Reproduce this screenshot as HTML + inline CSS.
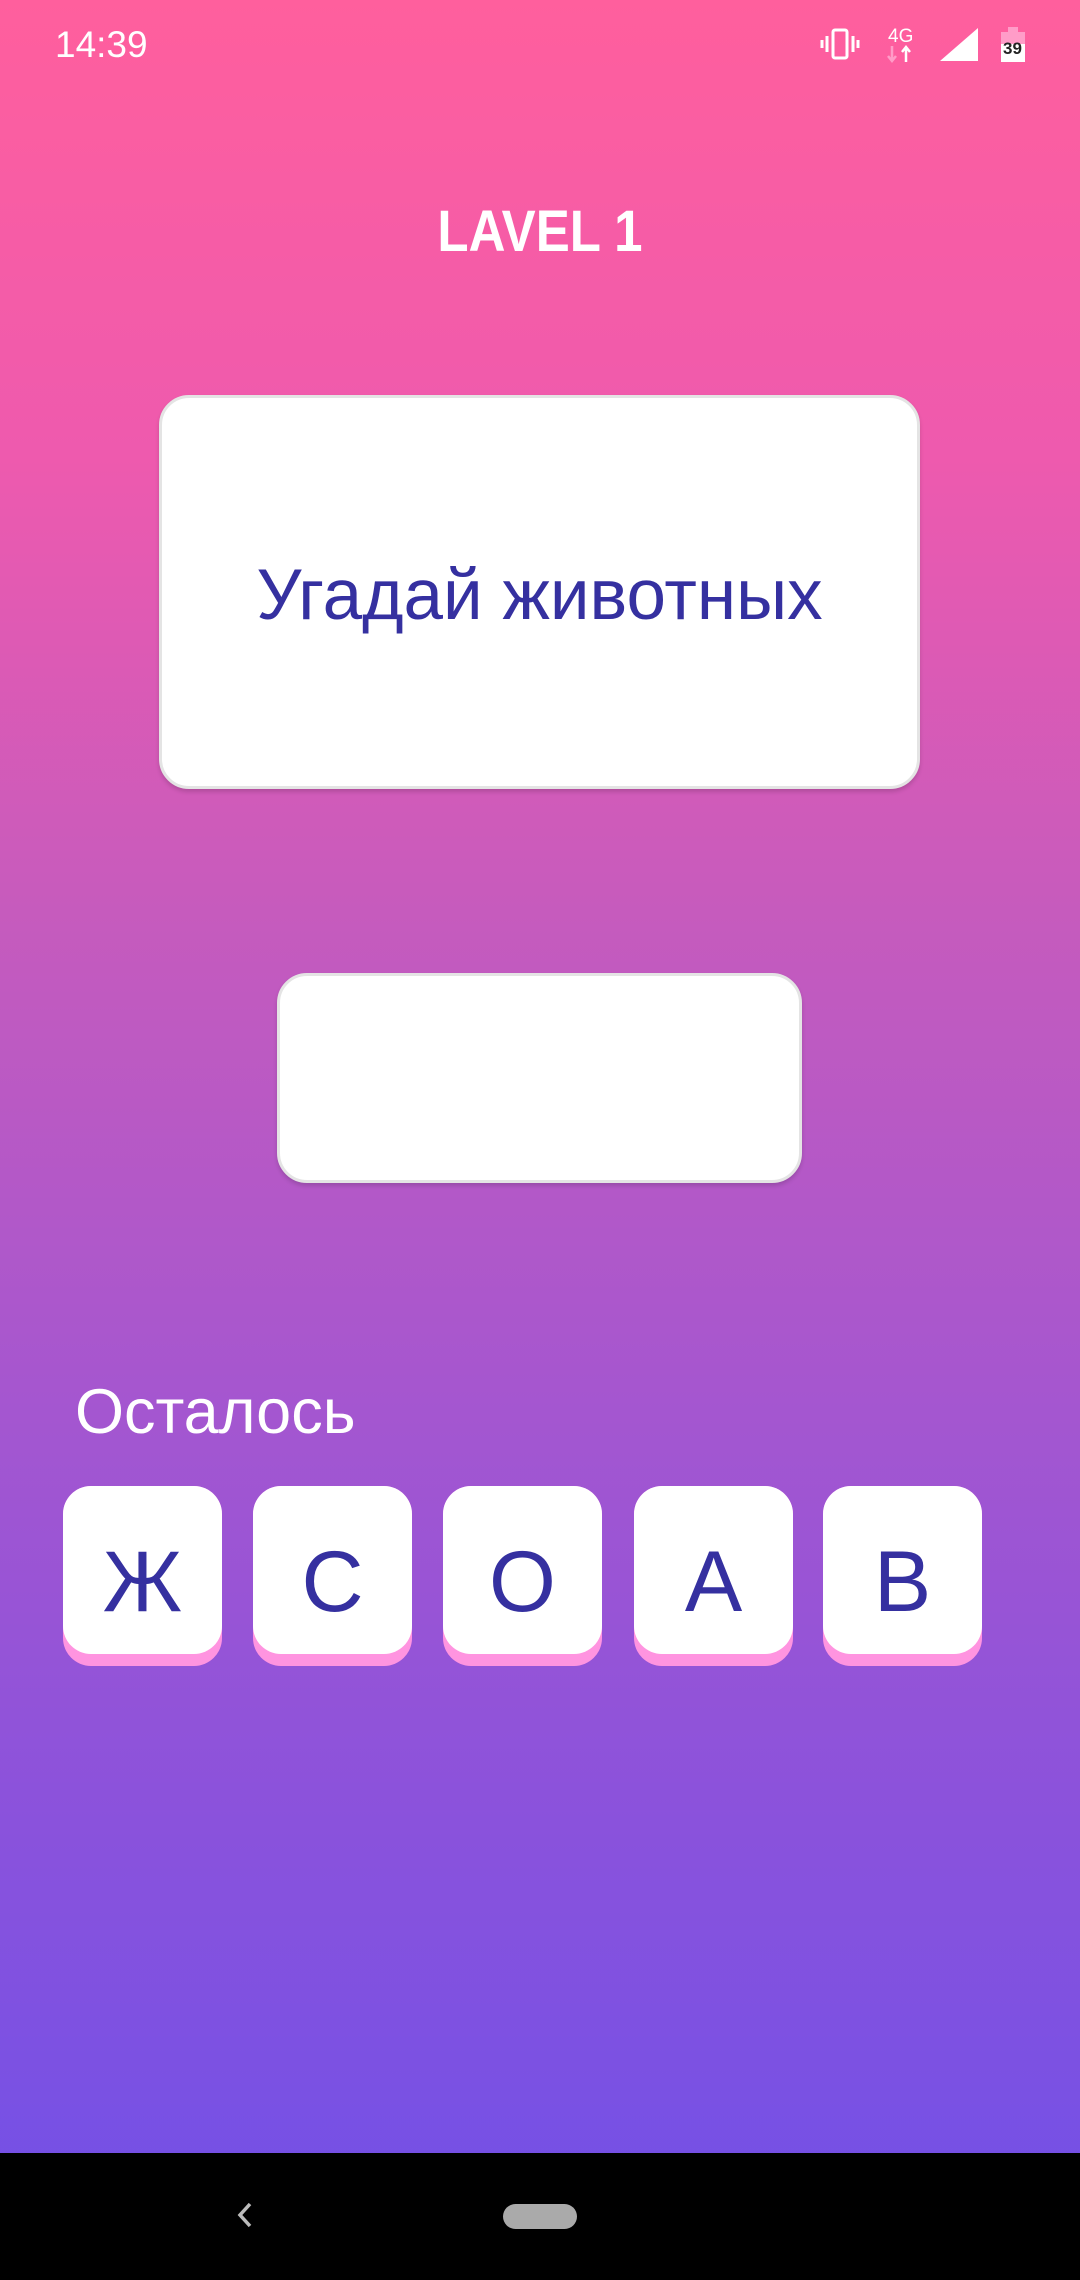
<!DOCTYPE html>
<html><head><meta charset="utf-8"><style>
*{margin:0;padding:0;box-sizing:border-box}
body{width:1080px;height:2280px;overflow:hidden;position:relative;font-family:"Liberation Sans","DejaVu Sans",sans-serif;
background:linear-gradient(180deg,#ff5f9d 0%,#ee5aae 20%,#c65bbd 40%,#a456d0 62%,#8a52dc 80%,#6f50e8 100%)}
.abs{position:absolute}
.card{background:#fff;border-radius:30px;border:3px solid #e4e4e4;box-shadow:0 3px 4px rgba(0,0,0,.15)}
.tile{position:absolute;top:1486px;width:159px;height:180px;border-radius:28px;background:#ff94e0}
.tile div{position:absolute;left:0;top:0;width:159px;height:168px;border-radius:28px;background:#fff;color:#3530a0;font-size:86px;text-align:center;line-height:192px}
</style></head><body>
<div class="abs" style="left:55px;top:24px;color:#fff;font-size:37px">14:39</div>
<svg class="abs" style="left:820px;top:26px" width="210" height="40" viewBox="0 0 210 40">
<g fill="none" stroke="#fff" stroke-width="3"><rect x="13" y="4" width="14" height="28" rx="2"/><line x1="7" y1="10" x2="7" y2="26"/><line x1="33" y1="10" x2="33" y2="26"/><line x1="2" y1="14" x2="2" y2="22"/><line x1="38" y1="14" x2="38" y2="22"/></g>
<text x="68" y="16" fill="#fff" font-size="19" font-family="Liberation Sans">4G</text>
<path d="M72 20v14M68 30l4 5 4-5" stroke="#ff9cc8" stroke-width="2.5" fill="none"/><path d="M86 36v-14M82 26l4-5 4 5" stroke="#fff" stroke-width="2.5" fill="none"/>
<polygon points="120,35 158,35 158,2" fill="#fff"/>
<rect x="181" y="6" width="24" height="30" fill="#fff"/><rect x="181" y="6" width="24" height="12" fill="#ff9cc8"/><rect x="188" y="1" width="10" height="6" fill="#ff9cc8"/>
<text x="183" y="28" fill="#222" font-size="17" font-weight="bold" font-family="Liberation Sans">39</text></svg>
<div class="abs" style="left:0;width:1080px;top:198px;text-align:center;color:#fff;font-size:58px;font-weight:bold;transform:scaleX(0.88)">LAVEL 1</div>
<div class="abs card" style="left:159px;top:395px;width:761px;height:394px"></div>
<div class="abs" style="left:159px;width:761px;top:555px;text-align:center;color:#3530a0;font-size:71px">Угадай животных</div>
<div class="abs card" style="left:277px;top:973px;width:525px;height:210px"></div>
<div class="abs" style="left:75px;top:1376px;color:#fff;font-size:63px">Осталось</div>
<div class="tile" style="left:63px"><div>Ж</div></div>
<div class="tile" style="left:253px"><div>С</div></div>
<div class="tile" style="left:443px"><div>О</div></div>
<div class="tile" style="left:634px"><div>А</div></div>
<div class="tile" style="left:823px"><div>В</div></div>
<div class="abs" style="left:0;top:2153px;width:1080px;height:127px;background:#000"></div>
<svg class="abs" style="left:230px;top:2200px" width="30" height="30"><path d="M20 4 10 15 20 26" stroke="#bbb" stroke-width="3.5" fill="none"/></svg>
<div class="abs" style="left:503px;top:2204px;width:74px;height:25px;border-radius:13px;background:#aaa"></div>
</body></html>
